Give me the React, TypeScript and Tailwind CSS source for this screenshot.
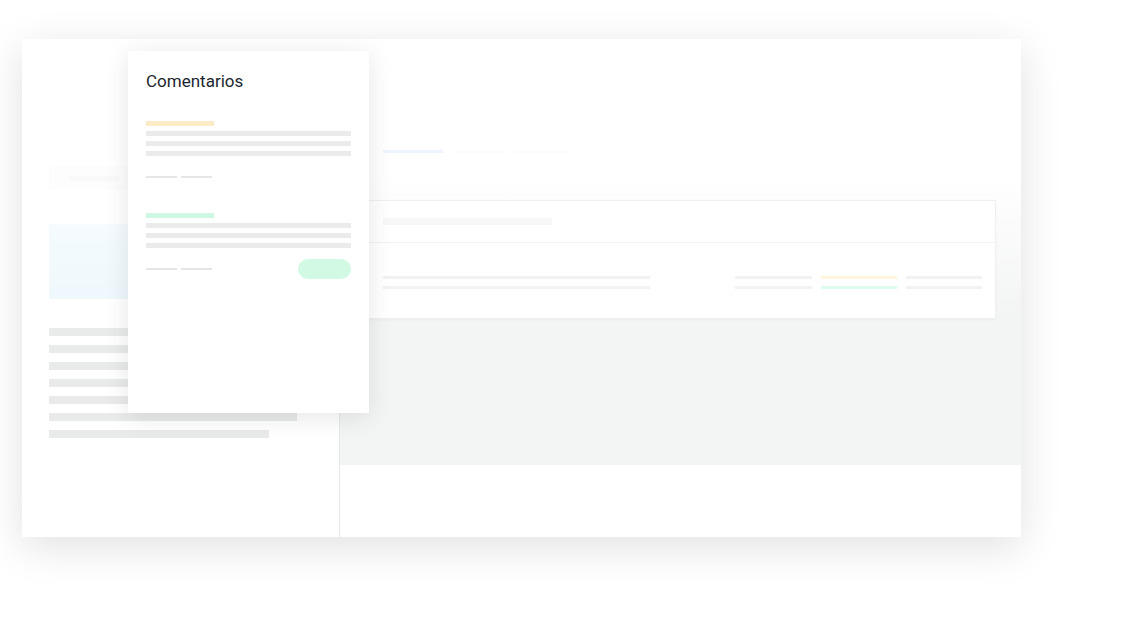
import React from 'react';

const LEFT_LINES = [248, 248, 248, 248, 248, 248, 220];

function Bar({ className }: { className: string }) {
  return <div className={className} />;
}

function Comment({ accent, button }: { accent: string; button?: boolean }) {
  return (
    <div className="flex flex-col">
      <Bar className={`h-[5px] w-[68px] ${accent}`} />
      <div className="mt-[5px] flex flex-col gap-[5px]">
        <Bar className="h-[5px] w-full bg-[#ebebeb]" />
        <Bar className="h-[5px] w-full bg-[#ebebeb]" />
        <Bar className="h-[5px] w-full bg-[#ebebeb]" />
      </div>
      <div className="mt-[11px] flex h-[20px] items-center justify-between">
        <div className="flex gap-[4px]">
          <Bar className="h-[2px] w-[31px] bg-[#e6e6e6]" />
          <Bar className="h-[2px] w-[31px] bg-[#e6e6e6]" />
        </div>
        {button && <div className="h-[20px] w-[53px] rounded-full bg-[#d1f9e4]" />}
      </div>
    </div>
  );
}

export default function App() {
  return (
    <div className="relative h-[644px] w-[1146px] overflow-hidden bg-white" style={{ fontFamily: 'Roboto, "Noto Sans", sans-serif' }}>
      <div className="pl-[22px] pt-[39px]">
        {/* app window */}
        <div className="relative flex h-[498px] w-[999px] bg-white shadow-[0_10px_40px_rgba(0,0,0,0.12)]">
          {/* left column */}
          <div className="flex w-[317px] shrink-0 flex-col pl-[27px]">
            <div className="mt-[127px] flex h-[24px] items-center bg-[#fdfdfd] pl-[20px]">
              <Bar className="h-[5px] w-[50px] bg-[#f9f9f9]" />
            </div>
            <div className="mt-[34px] h-[75px] w-[248px] bg-gradient-to-b from-[#f5fbfe] to-[#eff8fc]" />
            <div className="mt-[29px] flex flex-col gap-[9px]">
              {LEFT_LINES.map((w, i) => (
                <div key={i} className="h-[8px] bg-[#e9eaea]" style={{ width: w }} />
              ))}
            </div>
          </div>
          <div className="w-px shrink-0 bg-gradient-to-b from-white from-[20%] to-[#e6e7e7] to-[60%]" />

          {/* right panel */}
          <div className="flex flex-1 flex-col">
            <div className="h-[136px] shrink-0 bg-white pl-[43px] pt-[111px]">
              <div className="flex items-center gap-[8px]">
                <Bar className="h-[3px] w-[60px] bg-[#eef4fd]" />
                <Bar className="h-[2px] w-[55px] bg-[#fcfcfc]" />
                <Bar className="h-[2px] w-[55px] bg-[#fcfcfc]" />
                <Bar className="h-[2px] w-[55px] bg-[#fdfdfd]" />
              </div>
            </div>
            <div className="h-[290px] shrink-0 bg-gradient-to-b from-white from-[0%] to-[#f3f4f4] to-[50%] pl-[22px] pr-[25px] pt-[25px]">
              <div className="flex flex-col border border-[#f0f0f0] bg-white shadow-[0_1px_3px_rgba(0,0,0,0.04)]">
                <div className="flex h-[42px] items-center border-b border-[#f2f2f2] pl-[20px]">
                  <Bar className="h-[7px] w-[169px] bg-[#f7f7f7]" />
                </div>
                <div className="flex h-[75px] items-center justify-between pl-[20px] pr-[13px] pt-[4px]">
                  <div className="flex flex-col gap-[7px]">
                    <Bar className="h-[3px] w-[267px] bg-[#f1f2f2]" />
                    <Bar className="h-[3px] w-[267px] bg-[#f1f2f2]" />
                  </div>
                  <div className="flex gap-[9px]">
                    <div className="flex flex-col gap-[7px]">
                      <Bar className="h-[3px] w-[77px] bg-[#f1f2f2]" />
                      <Bar className="h-[3px] w-[77px] bg-[#f1f2f2]" />
                    </div>
                    <div className="flex flex-col gap-[7px]">
                      <Bar className="h-[3px] w-[76px] bg-[#fff4dc]" />
                      <Bar className="h-[3px] w-[76px] bg-[#dcfcee]" />
                    </div>
                    <div className="flex flex-col gap-[7px]">
                      <Bar className="h-[3px] w-[76px] bg-[#f1f2f2]" />
                      <Bar className="h-[3px] w-[76px] bg-[#f1f2f2]" />
                    </div>
                  </div>
                </div>
              </div>
            </div>
            <div className="flex-1 bg-white" />
          </div>

          {/* comments popover */}
          <div className="absolute left-[106px] top-[12px] h-[362px] w-[241px] bg-white px-[18px] pt-[18px] shadow-[0_4px_24px_rgba(0,0,0,0.1)]">
            <h2 className="text-[17px] leading-[24px] text-[#1b262e]">Comentarios</h2>
            <div className="mt-[28px] flex flex-col gap-[26px]">
              <Comment accent="bg-[#fdebc8]" />
              <Comment accent="bg-[#cff8e3]" button />
            </div>
          </div>
        </div>
      </div>
    </div>
  );
}
